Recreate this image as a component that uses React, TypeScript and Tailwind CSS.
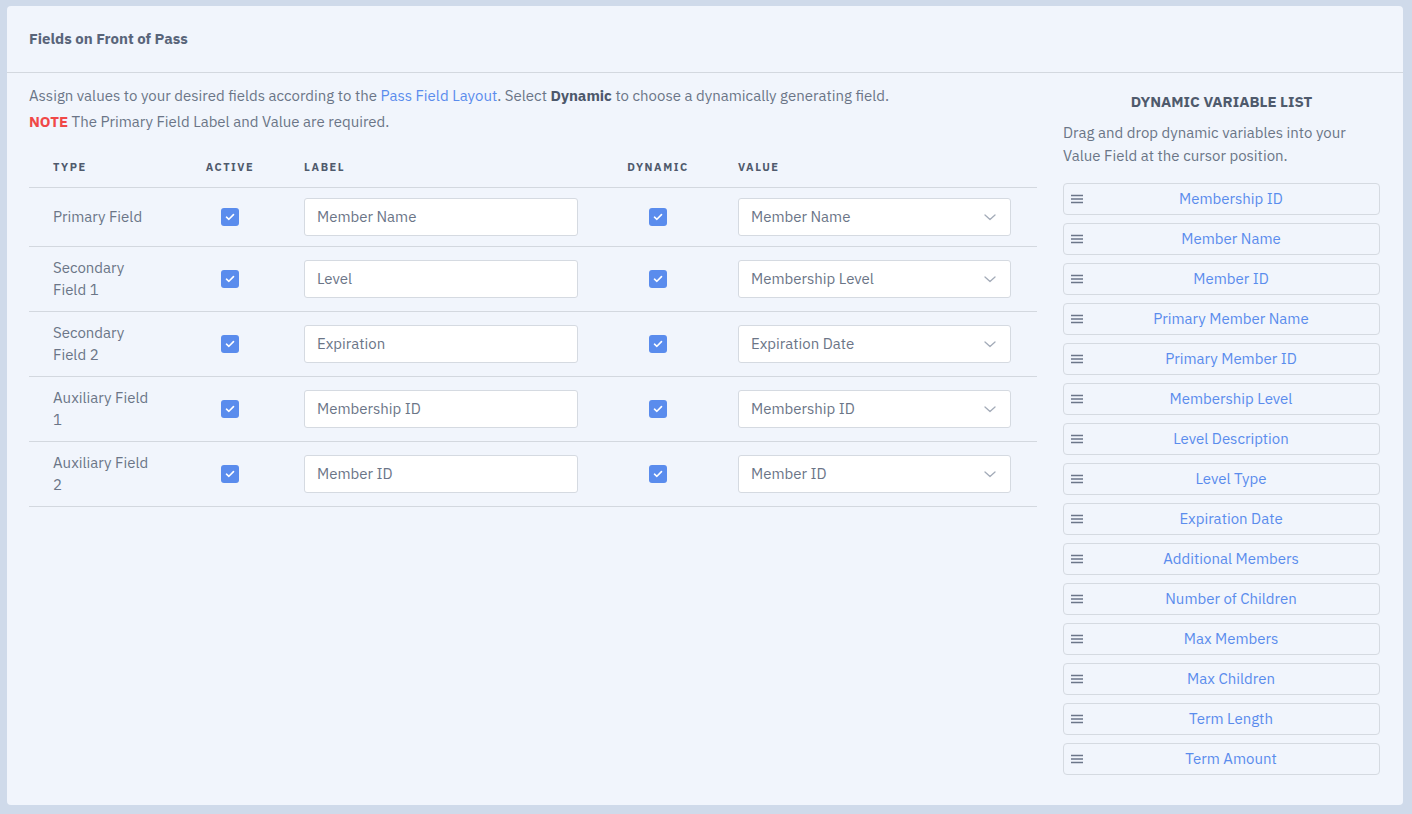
import React from 'react';

const rows = [
  { type: 'Primary Field', label: 'Member Name', value: 'Member Name' },
  { type: 'Secondary Field 1', label: 'Level', value: 'Membership Level' },
  { type: 'Secondary Field 2', label: 'Expiration', value: 'Expiration Date' },
  { type: 'Auxiliary Field 1', label: 'Membership ID', value: 'Membership ID' },
  { type: 'Auxiliary Field 2', label: 'Member ID', value: 'Member ID' },
];

const variables = [
  'Membership ID',
  'Member Name',
  'Member ID',
  'Primary Member Name',
  'Primary Member ID',
  'Membership Level',
  'Level Description',
  'Level Type',
  'Expiration Date',
  'Additional Members',
  'Number of Children',
  'Max Members',
  'Max Children',
  'Term Length',
  'Term Amount',
];

const Check = () => (
  <span className="w-[18px] h-[18px] rounded-[3px] bg-[#5a8ced] flex items-center justify-center">
    <svg width="10" height="8" viewBox="0 0 10 8" fill="none">
      <path d="M1.5 4.2 L3.9 6.3 L8.5 1.6" stroke="white" strokeWidth="1.6" strokeLinecap="round" strokeLinejoin="round" />
    </svg>
  </span>
);

const Chevron = () => (
  <svg width="12" height="7" viewBox="0 0 12 7" fill="none">
    <path d="M1 1 L6 5.5 L11 1" stroke="#a3abb8" strokeWidth="1.3" strokeLinecap="round" strokeLinejoin="round" />
  </svg>
);

const Grip = () => (
  <svg width="12" height="10" viewBox="0 0 12 10" fill="none">
    <path d="M0 1.5 H12 M0 5 H12 M0 8.5 H12" stroke="#6b7689" strokeWidth="1.4" />
  </svg>
);

const cols = 'grid grid-cols-[151px_100px_322px_112px_323px]';

export default function App() {
  return (
    <div className="min-h-screen bg-[#cfdaea] pt-[6px] pl-[7px] pr-[9px] pb-[9px] font-['IBM_Plex_Sans','Noto_Sans',sans-serif]">
      <div className="bg-[#f1f5fc] rounded-[4px]">
        {/* Header */}
        <div className="h-[67px] flex items-center px-[22px] border-b border-[#d3d8df]">
          <h2 className="text-[15px] font-bold text-[#59657a]">Fields on Front of Pass</h2>
        </div>

        {/* Body */}
        <div className="flex gap-[26px] px-[22px] pb-[30px]">
          <div className="w-[1008px] pt-[10px]">
            <p className="text-[15px] leading-[26px] text-[#6b7587]">
              Assign values to your desired fields according to the{' '}
              <span className="text-[#5a8ced]">Pass Field Layout</span>. Select{' '}
              <span className="font-bold text-[#4d586b]">Dynamic</span> to choose a dynamically generating field.
            </p>
            <p className="text-[15px] leading-[26px] text-[#6b7587]">
              <span className="font-bold text-[#f04848]">NOTE</span> The Primary Field Label and Value are required.
            </p>

            <div className="mt-[12px]">
              <div className={`${cols} border-b border-[#d3d8df] text-[11px] leading-[13px] font-bold tracking-[0.14em] text-[#4f5a6c]`}>
                <div className="px-6 pt-[14px] pb-[13px]">TYPE</div>
                <div className="pt-[14px] pb-[13px] text-center">ACTIVE</div>
                <div className="px-6 pt-[14px] pb-[13px]">LABEL</div>
                <div className="pt-[14px] pb-[13px] text-center">DYNAMIC</div>
                <div className="px-6 pt-[14px] pb-[13px]">VALUE</div>
              </div>
              {rows.map((r) => (
                <div key={r.type} className={`${cols} border-b border-[#d3d8df] items-center`}>
                  <div className="px-6 py-[10px] text-[15px] leading-[22px] text-[#6b7587]">{r.type}</div>
                  <div className="flex justify-center">
                    <Check />
                  </div>
                  <div className="px-6 py-[10px]">
                    <div className="h-[38px] bg-white border border-[#d5dae1] rounded-[3px] px-[12px] flex items-center text-[15px] text-[#6b7587]">
                      {r.label}
                    </div>
                  </div>
                  <div className="flex justify-center">
                    <Check />
                  </div>
                  <div className="pl-6 pr-[26px] py-[10px]">
                    <div className="h-[38px] bg-white border border-[#d5dae1] rounded-[3px] pl-[12px] pr-[14px] flex items-center justify-between text-[15px] text-[#6b7587]">
                      <span>{r.value}</span>
                      <Chevron />
                    </div>
                  </div>
                </div>
              ))}
            </div>
          </div>

          {/* Dynamic variable list */}
          <div className="w-[317px] pt-[19px]">
            <h3 className="text-center text-[15px] leading-[20px] font-bold text-[#4f5a6c]">DYNAMIC VARIABLE LIST</h3>
            <p className="mt-[9px] text-[15px] leading-[23px] text-[#6b7587]">
              Drag and drop dynamic variables into your Value Field at the cursor position.
            </p>
            <div className="mt-[16px] flex flex-col gap-[8px]">
              {variables.map((v) => (
                <div
                  key={v}
                  className="h-[32px] border border-[#d5dae1] rounded-[4px] flex items-center pl-[7px] text-[15px] text-[#5a8ced]"
                >
                  <Grip />
                  <span className="flex-1 text-center">{v}</span>
                </div>
              ))}
            </div>
          </div>
        </div>
      </div>
    </div>
  );
}
